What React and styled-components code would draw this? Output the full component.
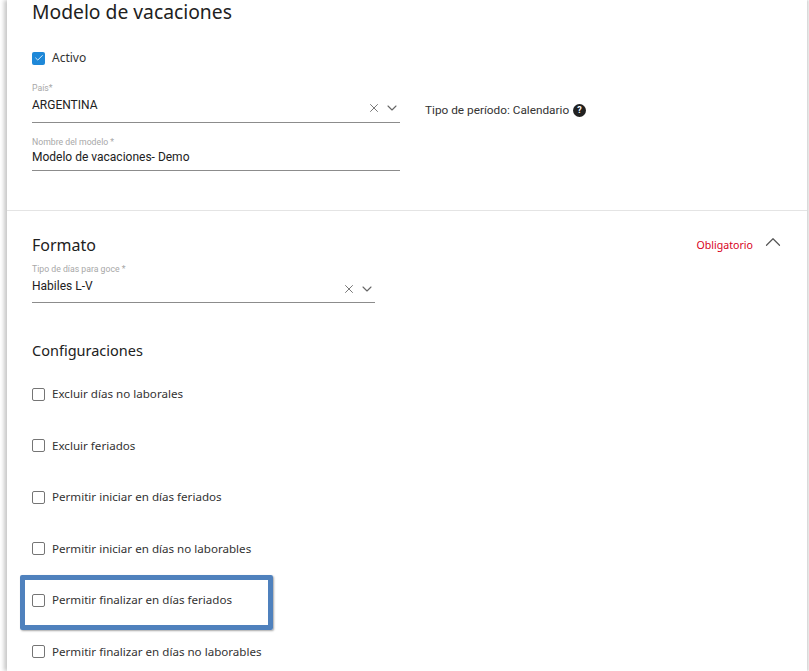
import React from "react";
import styled, { createGlobalStyle } from "styled-components";
import { X, ChevronDown, ChevronUp, Check } from "lucide-react";

const Global = createGlobalStyle`
  html, body { margin: 0; padding: 0; background: #fff; }
  body { font-family: Roboto, "Liberation Sans", sans-serif; color: #212121; }
`;

const Page = styled.div`
  width: 809px;
  height: 671px;
  overflow: hidden;
  box-sizing: border-box;
  position: relative;
  background: #fff;
`;

const Card = styled.div`
  margin-left: 7px;
  width: 800px;
  height: 671px;
  box-shadow: -3px 0 4px rgba(0, 0, 0, 0.22), 2px 0 2px rgba(0, 0, 0, 0.15);
  background: #fff;
`;

const TopSection = styled.section`
  height: 211px;
  box-sizing: border-box;
  padding: 0 25px;
  border-bottom: 1px solid #e4e4e4;
`;

const Title = styled.h1`
  margin: 0;
  font: 400 19.3px/24px "Noto Sans", sans-serif;
  color: #212121;
`;

const CheckRow = styled.label`
  display: flex;
  align-items: center;
  gap: 7px;
  height: 14px;
  font: 400 ${(p) => p.$size || 11.6}px/14px "Noto Sans", sans-serif;
  color: #333;
  margin-top: ${(p) => p.$mt || 0}px;
`;

const Box = styled.span`
  flex: none;
  display: flex;
  align-items: center;
  justify-content: center;
  border-radius: 2px;
  background: ${(p) => (p.$on ? "#1e88d8" : "#fff")};
  border: ${(p) => (p.$on ? "0" : "1px solid #757575")};
  width: ${(p) => (p.$on ? 13 : 11)}px;
  height: ${(p) => (p.$on ? 13 : 11)}px;
`;

const FieldRow = styled.div`
  display: flex;
  align-items: flex-start;
`;

const Field = styled.div`
  width: ${(p) => p.$w}px;
  box-sizing: border-box;
  height: ${(p) => p.$h}px;
  margin-top: ${(p) => p.$mt || 0}px;
  border-bottom: 1px solid #8c8c8c;
  flex: none;
`;

const FieldLabel = styled.div`
  font: 400 8.7px/11px Roboto, sans-serif;
  color: #a8a8a8;
`;

const FieldValue = styled.div`
  display: flex;
  align-items: center;
  justify-content: space-between;
  font: 400 12px/16px Roboto, sans-serif;
  color: #212121;
  margin-top: ${(p) => p.$mt || 0}px;
`;

const FieldIcons = styled.span`
  display: flex;
  align-items: center;
  gap: 3.5px;
  color: #666;
  position: relative;
  top: 3px;
`;

const PeriodInfo = styled.div`
  display: flex;
  align-items: center;
  gap: 4px;
  margin: 37px 0 0 25px;
  font: 400 11.8px/16px Roboto, sans-serif;
  color: #333;
`;

const HelpDot = styled.span`
  width: 13px;
  height: 13px;
  border-radius: 50%;
  background: #212121;
  color: #fff;
  font: 700 9px/13px Roboto, sans-serif;
  text-align: center;
`;

const FormatSection = styled.section`
  padding: 0 25px;
`;

const FormatHead = styled.div`
  display: flex;
  align-items: center;
  justify-content: space-between;
  padding-top: 22px;
  height: 24px;
`;

const SectionTitle = styled.h2`
  margin: ${(p) => p.$mt || 0}px 0 0;
  font: 400 ${(p) => p.$size}px/24px "Noto Sans", sans-serif;
  color: #212121;
`;

const Required = styled.div`
  display: flex;
  align-items: center;
  gap: 6.5px;
  margin-right: -3.5px;
  font: 400 10.6px/16px "Noto Sans", sans-serif;
  color: #d8001c;
`;

const CollapseIcon = styled(ChevronUp)`
  color: #555;
  transform: translateY(-3px);
`;

const CheckList = styled.div`
  display: flex;
  flex-direction: column;
  gap: 37.6px;
  margin-top: 25px;
`;

const ListRow = styled.div`
  position: relative;
`;

const Highlight = styled.div`
  position: absolute;
  left: -12px;
  top: -18px;
  width: 253px;
  height: 55px;
  box-sizing: border-box;
  border: 5px solid #4f81bd;
  border-radius: 2px;
  box-shadow: 1px 1px 2px rgba(0, 0, 0, 0.35);
  pointer-events: none;
`;

const options = [
  "Excluir días no laborales",
  "Excluir feriados",
  "Permitir iniciar en días feriados",
  "Permitir iniciar en días no laborables",
  "Permitir finalizar en días feriados",
  "Permitir finalizar en días no laborables",
];

const SelectIcons = () => (
  <FieldIcons>
    <X size={14} strokeWidth={1.5} />
    <ChevronDown size={16} strokeWidth={1.6} />
  </FieldIcons>
);

export default function App() {
  return (
    <Page>
      <Global />
      <Card>
        <TopSection>
          <Title>Modelo de vacaciones</Title>
          <CheckRow $mt={27} $size={12}>
            <Box $on>
              <Check size={10} strokeWidth={2} color="#fff" />
            </Box>
            Activo
          </CheckRow>
          <FieldRow>
            <Field $w={368} $h={40} $mt={18}>
              <FieldLabel>País*</FieldLabel>
              <FieldValue $mt={3}>
                ARGENTINA
                <SelectIcons />
              </FieldValue>
            </Field>
            <PeriodInfo>
              Tipo de período: Calendario
              <HelpDot>?</HelpDot>
            </PeriodInfo>
          </FieldRow>
          <Field $w={368} $h={34} $mt={14}>
            <FieldLabel>Nombre del modelo *</FieldLabel>
            <FieldValue $mt={1}>Modelo de vacaciones- Demo</FieldValue>
          </Field>
        </TopSection>
        <FormatSection>
          <FormatHead>
            <SectionTitle $size={16}>Formato</SectionTitle>
            <Required>
              Obligatorio
              <CollapseIcon size={26} strokeWidth={1.1} />
            </Required>
          </FormatHead>
          <Field $w={343} $h={39} $mt={7}>
            <FieldLabel>Tipo de días para goce *</FieldLabel>
            <FieldValue $mt={3}>
              Habiles L-V
              <SelectIcons />
            </FieldValue>
          </Field>
          <SectionTitle $size={14.5} $mt={35}>Configuraciones</SectionTitle>
          <CheckList>
            {options.map((text, i) => (
              <ListRow key={text}>
                {i === 4 && <Highlight />}
                <CheckRow>
                  <Box />
                  {text}
                </CheckRow>
              </ListRow>
            ))}
          </CheckList>
        </FormatSection>
      </Card>
    </Page>
  );
}
